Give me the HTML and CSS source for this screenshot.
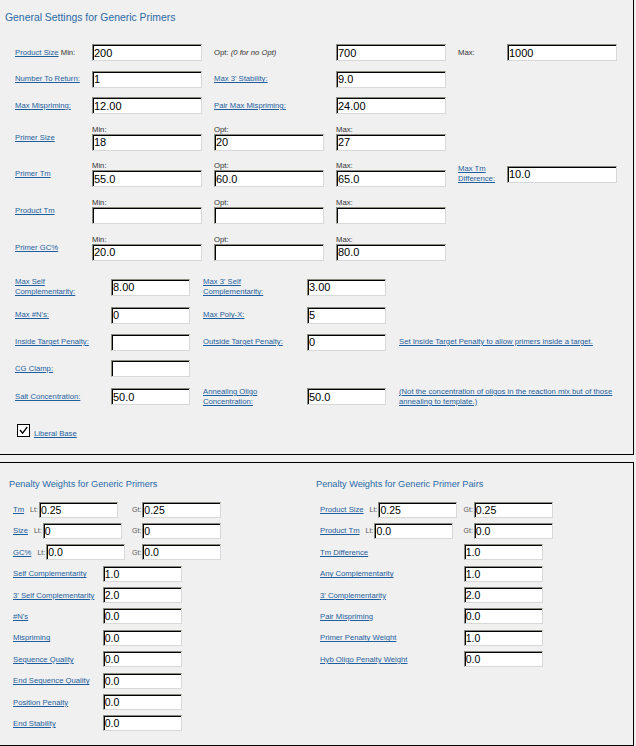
FILE: index.html
```html
<!DOCTYPE html>
<html>
<head>
<meta charset="utf-8">
<title>Primer settings</title>
<link rel="stylesheet" href="styles.css">
</head>
<body>
<div class="panel p1">
  <h2 class="title t1">General Settings for Generic Primers</h2>

  <div class="grid-a">
    <div class="lab"><a href="#">Product Size</a> Min:</div>
    <div><input class="in" value="200"></div>
    <div class="lab">Opt: <i>(0 for no Opt)</i></div>
    <div><input class="in" value="700"></div>
    <div class="lab">Max:</div>
    <div><input class="in" value="1000"></div>

    <div class="lab"><a href="#">Number To Return:</a></div>
    <div><input class="in" value="1"></div>
    <div class="lab"><a href="#">Max 3' Stability:</a></div>
    <div><input class="in" value="9.0"></div>
    <div></div><div></div>

    <div class="lab"><a href="#">Max Mispriming:</a></div>
    <div><input class="in" value="12.00"></div>
    <div class="lab"><a href="#">Pair Max Mispriming:</a></div>
    <div><input class="in" value="24.00"></div>
    <div></div><div></div>

    <div class="lab"><a href="#">Primer Size</a></div>
    <div class="stack"><span class="cap">Min:</span><input class="in" value="18"></div>
    <div class="stack"><span class="cap">Opt:</span><input class="in" value="20"></div>
    <div class="stack"><span class="cap">Max:</span><input class="in" value="27"></div>
    <div></div><div></div>

    <div class="lab"><a href="#">Primer Tm</a></div>
    <div class="stack"><span class="cap">Min:</span><input class="in" value="55.0"></div>
    <div class="stack"><span class="cap">Opt:</span><input class="in" value="60.0"></div>
    <div class="stack"><span class="cap">Max:</span><input class="in" value="65.0"></div>
    <div class="lab"><a href="#">Max Tm Difference:</a></div>
    <div><input class="in" value="10.0"></div>

    <div class="lab"><a href="#">Product Tm</a></div>
    <div class="stack"><span class="cap">Min:</span><input class="in" value=""></div>
    <div class="stack"><span class="cap">Opt:</span><input class="in" value=""></div>
    <div class="stack"><span class="cap">Max:</span><input class="in" value=""></div>
    <div></div><div></div>

    <div class="lab"><a href="#">Primer GC%</a></div>
    <div class="stack"><span class="cap">Min:</span><input class="in" value="20.0"></div>
    <div class="stack"><span class="cap">Opt:</span><input class="in" value=""></div>
    <div class="stack"><span class="cap">Max:</span><input class="in" value="80.0"></div>
    <div></div><div></div>
  </div>

  <div class="grid-b">
    <div class="lab nb"><a href="#">Max Self Complementarity:</a></div>
    <div><input class="in sm" value="8.00"></div>
    <div class="lab nb"><a href="#">Max 3' Self Complementarity:</a></div>
    <div><input class="in sm" value="3.00"></div>
    <div></div>

    <div class="lab nb"><a href="#">Max #N's:</a></div>
    <div><input class="in sm" value="0"></div>
    <div class="lab nb"><a href="#">Max Poly-X:</a></div>
    <div><input class="in sm" value="5"></div>
    <div></div>

    <div class="lab nb"><a href="#">Inside Target Penalty:</a></div>
    <div><input class="in sm" value=""></div>
    <div class="lab nb"><a href="#">Outside Target Penalty:</a></div>
    <div><input class="in sm" value="0"></div>
    <div class="lab note"><a href="#">Set Inside Target Penalty to allow primers inside a target.</a></div>

    <div class="lab nb"><a href="#">CG Clamp:</a></div>
    <div><input class="in sm" value=""></div>
    <div></div><div></div><div></div>

    <div class="lab nb"><a href="#">Salt Concentration:</a></div>
    <div><input class="in sm" value="50.0"></div>
    <div class="lab nb"><a href="#">Annealing Oligo Concentration:</a></div>
    <div><input class="in sm" value="50.0"></div>
    <div class="lab note"><a href="#">(Not the concentration of oligos in the reaction mix but of those annealing to template.)</a></div>
  </div>

  <div class="check-row">
    <span class="cb"><svg width="11" height="11" viewBox="0 0 11 11"><path d="M2 5 L4.6 8.2 L9.2 2" fill="none" stroke="#000" stroke-width="1.3"/></svg></span>
    <a href="#" class="lab">Liberal Base</a>
  </div>
</div>

<div class="panel p2">
  <div class="p2-cols">
    <div class="col col-l">
      <h3 class="title t2">Penalty Weights for Generic Primers</h3>
      <div class="rows">
        <div class="row"><div class="c1 l1"><a href="#">Tm</a><span class="lt">Lt:</span><input class="in s2" value="0.25"></div><div class="c2"><span class="gt">Gt:</span><input class="in s2" value="0.25"></div></div>
        <div class="row"><div class="c1 l1"><a href="#">Size</a><span class="lt">Lt:</span><input class="in s2" value="0"></div><div class="c2"><span class="gt">Gt:</span><input class="in s2" value="0"></div></div>
        <div class="row"><div class="c1 l1"><a href="#">GC%</a><span class="lt">Lt:</span><input class="in s2" value="0.0"></div><div class="c2"><span class="gt">Gt:</span><input class="in s2" value="0.0"></div></div>
        <div class="row"><div class="lb l2"><a href="#">Self Complementarity</a></div><input class="in s2" value="1.0"></div>
        <div class="row"><div class="lb l2"><a href="#">3' Self Complementarity</a></div><input class="in s2" value="2.0"></div>
        <div class="row"><div class="lb l2"><a href="#">#N's</a></div><input class="in s2" value="0.0"></div>
        <div class="row"><div class="lb l2"><a href="#">Mispriming</a></div><input class="in s2" value="0.0"></div>
        <div class="row"><div class="lb l2"><a href="#">Sequence Quality</a></div><input class="in s2" value="0.0"></div>
        <div class="row"><div class="lb l2"><a href="#">End Sequence Quality</a></div><input class="in s2" value="0.0"></div>
        <div class="row"><div class="lb l2"><a href="#">Position Penalty</a></div><input class="in s2" value="0.0"></div>
        <div class="row"><div class="lb l2"><a href="#">End Stability</a></div><input class="in s2" value="0.0"></div>
      </div>
    </div>
    <div class="col col-r">
      <h3 class="title t2">Penalty Weights for Generic Primer Pairs</h3>
      <div class="rows">
        <div class="row"><div class="c1 r1"><a href="#">Product Size</a><span class="lt">Lt:</span><input class="in s2" value="0.25"></div><div class="c2"><span class="gt">Gt:</span><input class="in s2" value="0.25"></div></div>
        <div class="row"><div class="c1 r1"><a href="#">Product Tm</a><span class="lt">Lt:</span><input class="in s2" value="0.0"></div><div class="c2"><span class="gt">Gt:</span><input class="in s2" value="0.0"></div></div>
        <div class="row"><div class="lb r2"><a href="#">Tm Difference</a></div><input class="in s2" value="1.0"></div>
        <div class="row"><div class="lb r2"><a href="#">Any Complementarity</a></div><input class="in s2" value="1.0"></div>
        <div class="row"><div class="lb r2"><a href="#">3' Complementarity</a></div><input class="in s2" value="2.0"></div>
        <div class="row"><div class="lb r2"><a href="#">Pair Mispriming</a></div><input class="in s2" value="0.0"></div>
        <div class="row"><div class="lb r2"><a href="#">Primer Penalty Weight</a></div><input class="in s2" value="1.0"></div>
        <div class="row"><div class="lb r2"><a href="#">Hyb Oligo Penalty Weight</a></div><input class="in s2" value="0.0"></div>
      </div>
    </div>
  </div>
</div>
</body>
</html>
```

FILE: styles.css
```css
* { box-sizing: border-box; }

body {
  margin: 0;
  background: #f0f0f0;
  font-family: "Liberation Sans", Arial, sans-serif;
  font-size: 7.7px;
  color: #333;
}

a {
  color: #1e5e9e;
  text-decoration: underline;
}

.panel {
  border: 1px solid #000;
  margin-left: -1px;
  width: 635px;
}

.p1 { margin-top: -1px; height: 456px; }
.p2 { margin-top: 7px; height: 284px; }

.title {
  margin: 0;
  font-weight: normal;
  color: #2a6aa6;
}

.t1 {
  font-size: 10.4px;
  line-height: 12px;
  padding: 12px 0 0 5px;
}

.t2 {
  font-size: 9.2px;
  line-height: 11px;
}

.lab {
  line-height: 10px;
}

.in {
  display: block;
  width: 110px;
  height: 17px;
  margin: 0;
  padding: 0 0 0 1px;
  background: #fff;
  border: 1px solid;
  border-color: #8a8a80 #d8d8d8 #d8d8d8 #8a8a80;
  box-shadow: inset 1px 1px 0 #000;
  font-family: "Liberation Sans", Arial, sans-serif;
  font-size: 11px;
  color: #000;
  outline: none;
}

.in.sm { width: 79px; }

.in.s2 {
  width: 79px;
  height: 16px;
  font-size: 10.5px;
}

/* general settings, upper grid */
.grid-a {
  display: grid;
  grid-template-columns: 77px 122px 122px 122px 49px 110px;
  grid-template-rows: 17px 17px 17px 27px 27px 27px 27px;
  row-gap: 9.7px;
  align-items: center;
  margin: 20px 0 0 15px;
}

.stack {
  display: flex;
  flex-direction: column;
}

.cap {
  line-height: 9px;
  color: #333;
}

/* general settings, lower grid */
.grid-b {
  display: grid;
  grid-template-columns: 96px 92px 104px 92px 1fr;
  grid-template-rows: 20px 17px 17px 17px 20px;
  row-gap: 9.7px;
  align-items: center;
  margin: 16px 0 0 15px;
}

.nb { max-width: 84px; }
.note { max-width: 220px; }

.check-row {
  display: flex;
  align-items: baseline;
  gap: 4px;
  margin-top: 17px;
  padding-left: 17px;
}

.cb {
  display: flex;
  align-items: center;
  justify-content: center;
  width: 13px;
  height: 13px;
  border: 1px solid #000;
  background: #fff;
}

/* penalty weights */
.p2-cols {
  display: grid;
  grid-template-columns: 316px 1fr;
  padding-top: 15.5px;
}

.col-l { padding-left: 9px; }

.rows {
  display: flex;
  flex-direction: column;
  gap: 5.4px;
  margin-top: 12px;
  padding-left: 4px;
}

.row {
  display: flex;
  align-items: center;
  height: 16px;
}

.c1, .c2 {
  display: flex;
  align-items: center;
}

.l1 { width: 119px; }
.r1 { width: 143.5px; }
.l2 { width: 89.7px; }
.r2 { width: 143.7px; }

.lt, .gt {
  font-size: 7px;
  color: #555;
  margin-right: 1px;
}

.lt { margin-left: 6px; }
```
